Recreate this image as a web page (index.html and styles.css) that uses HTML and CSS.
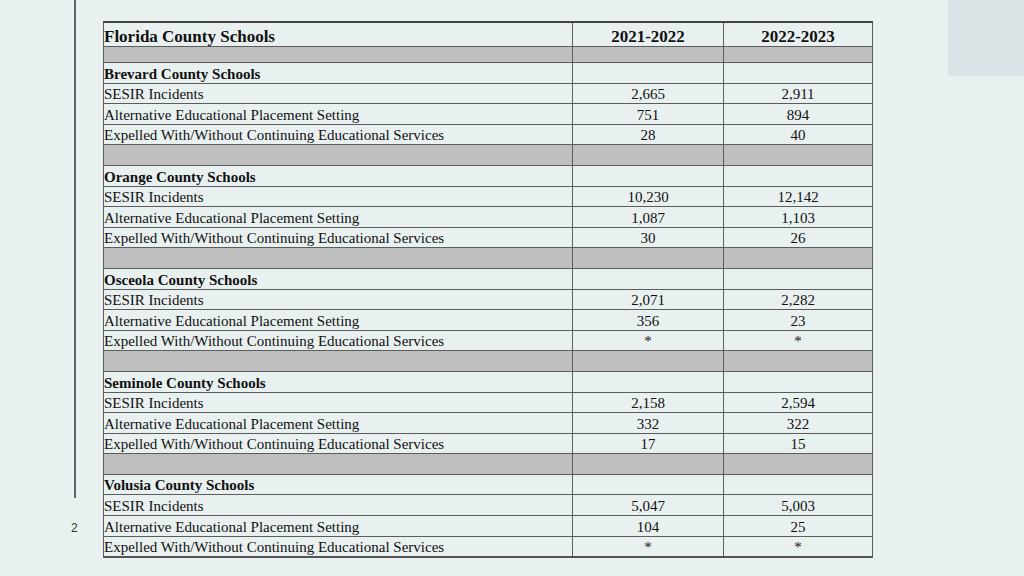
FILE: index.html
```html
<!DOCTYPE html>
<html>
<head>
<meta charset="utf-8">
<link rel="stylesheet" href="styles.css">
</head>
<body>
<div class="page">
  <div class="rail">
    <div class="rail-line"></div>
    <div class="page-num">2</div>
  </div>
  <table class="data">
    <tr class="head"><th class="label">Florida County Schools</th><th>2021-2022</th><th>2022-2023</th></tr>
    <tr class="sep first"><td></td><td></td><td></td></tr>
    <tr class="title"><td class="label">Brevard County Schools</td><td></td><td></td></tr>
    <tr><td class="label">SESIR Incidents</td><td>2,665</td><td>2,911</td></tr>
    <tr><td class="label">Alternative Educational Placement Setting</td><td>751</td><td>894</td></tr>
    <tr><td class="label">Expelled With/Without Continuing Educational Services</td><td>28</td><td>40</td></tr>
    <tr class="sep"><td></td><td></td><td></td></tr>
    <tr class="title"><td class="label">Orange County Schools</td><td></td><td></td></tr>
    <tr><td class="label">SESIR Incidents</td><td>10,230</td><td>12,142</td></tr>
    <tr><td class="label">Alternative Educational Placement Setting</td><td>1,087</td><td>1,103</td></tr>
    <tr><td class="label">Expelled With/Without Continuing Educational Services</td><td>30</td><td>26</td></tr>
    <tr class="sep"><td></td><td></td><td></td></tr>
    <tr class="title"><td class="label">Osceola County Schools</td><td></td><td></td></tr>
    <tr><td class="label">SESIR Incidents</td><td>2,071</td><td>2,282</td></tr>
    <tr><td class="label">Alternative Educational Placement Setting</td><td>356</td><td>23</td></tr>
    <tr><td class="label">Expelled With/Without Continuing Educational Services</td><td>*</td><td>*</td></tr>
    <tr class="sep"><td></td><td></td><td></td></tr>
    <tr class="title"><td class="label">Seminole County Schools</td><td></td><td></td></tr>
    <tr><td class="label">SESIR Incidents</td><td>2,158</td><td>2,594</td></tr>
    <tr><td class="label">Alternative Educational Placement Setting</td><td>332</td><td>322</td></tr>
    <tr><td class="label">Expelled With/Without Continuing Educational Services</td><td>17</td><td>15</td></tr>
    <tr class="sep"><td></td><td></td><td></td></tr>
    <tr class="title"><td class="label">Volusia County Schools</td><td></td><td></td></tr>
    <tr><td class="label">SESIR Incidents</td><td>5,047</td><td>5,003</td></tr>
    <tr><td class="label">Alternative Educational Placement Setting</td><td>104</td><td>25</td></tr>
    <tr><td class="label">Expelled With/Without Continuing Educational Services</td><td>*</td><td>*</td></tr>
  </table>
  <div class="corner"></div>
</div>
</body>
</html>
```
FILE: styles.css
```css
html, body {
  margin: 0;
  padding: 0;
}
body {
  background: #e9f0f0;
  width: 1024px;
  height: 576px;
  overflow: hidden;
  font-family: "Liberation Serif", "Times New Roman", serif;
  color: #111;
}
.page {
  display: flex;
  align-items: flex-start;
  height: 576px;
}
.rail {
  width: 103px;
  flex: none;
  display: flex;
  flex-direction: column;
}
.rail-line {
  margin-left: 74px;
  width: 2px;
  height: 498px;
  background: #56666a;
}
.page-num {
  margin-top: 23px;
  margin-left: 71px;
  font-family: "Liberation Sans", Arial, sans-serif;
  font-size: 12px;
  color: #333;
}
.data {
  margin-top: 21px;
  width: 770px;
  flex: none;
  border-collapse: collapse;
  font-size: 15px;
}
.data td, .data th {
  border: 1px solid #5c5c5c;
  padding: 0;
  text-align: center;
  vertical-align: bottom;
  height: 19.6px;
  line-height: 17px;
}
.data .label {
  width: 468px;
  text-align: left;
  padding-left: 0;
}
.data td:nth-child(2), .data th:nth-child(2) {
  width: 150px;
}
.head th {
  font-size: 17px;
  font-weight: bold;
  height: 23px;
  line-height: 19px;
  border-top: 2px solid #444;
}
.sep td {
  background: #bfbfbf;
  height: 19.6px;
}
.sep.first td {
  height: 15px;
}
.title td {
  font-weight: bold;
}
.data tr:last-child td {
  border-bottom: 2px solid #555;
}
.corner {
  margin-left: 75px;
  width: 77px;
  height: 76px;
  background: #d9e3e5;
  flex: none;
}
```
